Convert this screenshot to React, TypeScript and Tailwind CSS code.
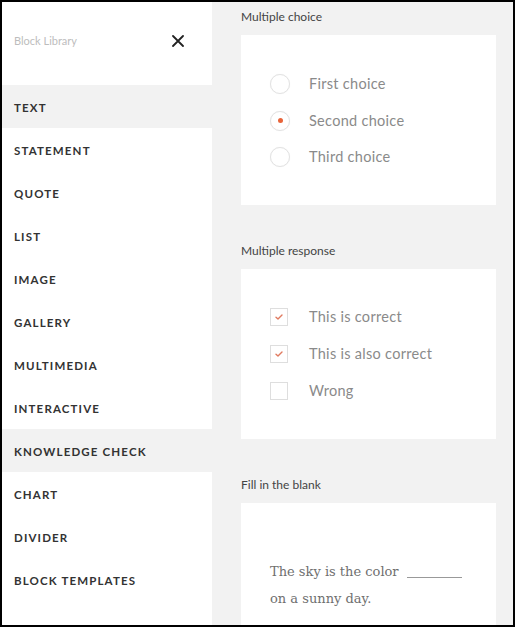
import React from 'react'

const blocks = [
  'Text',
  'Statement',
  'Quote',
  'List',
  'Image',
  'Gallery',
  'Multimedia',
  'Interactive',
  'Knowledge Check',
  'Chart',
  'Divider',
  'Block Templates',
]

const highlighted = ['Text', 'Knowledge Check']

const Radio = ({ checked }: { checked?: boolean }) => (
  <span className="flex h-[20px] w-[20px] items-center justify-center rounded-full border-[1.5px] border-[#e3e3e3] bg-white shadow-[0_0_1px_rgba(0,0,0,0.08)]">
    {checked && <span className="h-[5px] w-[5px] rounded-full bg-[#e8643a]" />}
  </span>
)

const Checkbox = ({ checked }: { checked?: boolean }) => (
  <span className="flex h-[18px] w-[18px] items-center justify-center border border-[#dedede] bg-white">
    {checked && (
      <svg width="8" height="6" viewBox="0 0 8 6" fill="none">
        <path d="M1 3.2L3 5L7 1" stroke="#e07a5f" strokeWidth="1.4" strokeLinecap="round" strokeLinejoin="round" />
      </svg>
    )}
  </span>
)

const Section = ({ label, children, first }: { label: string; children: React.ReactNode; first?: boolean }) => (
  <div className={first ? 'mt-[6px]' : 'mt-[37px]'}>
    <div className="h-[18px] text-[12px] leading-[18px] text-[#444]">{label}</div>
    <div className="mt-[9px]">{children}</div>
  </div>
)

export default function App() {
  return (
    <div
      className="flex h-[627px] w-[515px] overflow-hidden border-2 border-black bg-[#f2f2f2]"
      style={{ fontFamily: 'Lato, "Open Sans", sans-serif' }}
    >
      {/* Sidebar */}
      <aside className="flex w-[210px] shrink-0 flex-col bg-white">
        <div className="flex h-[83px] items-center justify-between pb-[5px] pl-[12px] pr-[28px]">
          <span className="text-[11px] text-[#bdbdbd]">Block Library</span>
          <svg width="12" height="12" viewBox="0 0 12 12" fill="none">
            <path d="M1 1L11 11M11 1L1 11" stroke="#222" strokeWidth="1.8" strokeLinecap="round" />
          </svg>
        </div>
        {blocks.map((b) => (
          <div
            key={b}
            className={
              'flex h-[43px] items-center pl-[12px] pt-[2px] text-[11.5px] font-bold uppercase tracking-[0.1em] text-[#333] ' +
              (highlighted.includes(b) ? 'bg-[#f2f2f2]' : 'bg-white')
            }
          >
            {b}
          </div>
        ))}
        <div className="flex-1 bg-white" />
      </aside>

      {/* Canvas */}
      <main className="flex-1 pl-[29px] pr-[17px]">
        <Section label="Multiple choice" first>
          <div className="h-[170px] bg-white pl-[29px] pt-[31px]">
            {['First choice', 'Second choice', 'Third choice'].map((c, i) => (
              <div key={c} className="flex h-[36.5px] items-center gap-[19px]">
                <Radio checked={i === 1} />
                <span className="text-[14.5px] tracking-[0.02em] text-[#8a8a8a]">{c}</span>
              </div>
            ))}
          </div>
        </Section>

        <Section label="Multiple response">
          <div className="h-[170px] bg-white pl-[29px] pt-[29px]">
            {['This is correct', 'This is also correct', 'Wrong'].map((c, i) => (
              <div key={c} className="flex h-[37px] items-center gap-[21px]">
                <Checkbox checked={i < 2} />
                <span className="text-[14.5px] tracking-[0.02em] text-[#8a8a8a]">{c}</span>
              </div>
            ))}
          </div>
        </Section>

        <Section label="Fill in the blank">
          <div className="h-[170px] bg-white pl-[29px] pt-[55px]">
            <p
              className="text-[13px] leading-[27px] text-[#6f6f6f]"
              style={{ fontFamily: '"DejaVu Serif", "Liberation Serif", serif' }}
            >
              The sky is the color
              <span className="ml-[8px] inline-block w-[55px] translate-y-[2px] border-b border-[#999]" />
              <br />
              on a sunny day.
            </p>
          </div>
        </Section>
      </main>
    </div>
  )
}
